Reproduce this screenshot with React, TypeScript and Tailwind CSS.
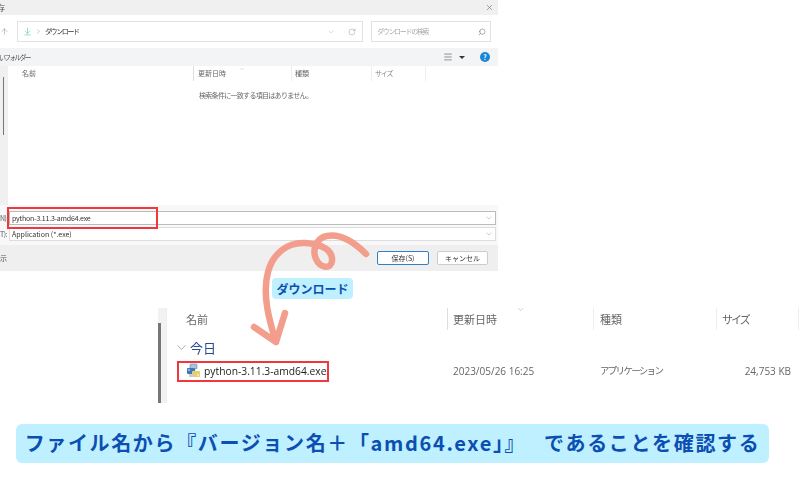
import { ChevronDown, Search, RotateCw, ArrowUp, ArrowDownToLine, ChevronRight, X, Menu } from "lucide-react";

const JP = "font-['Noto_Sans_CJK_JP','Noto_Sans',sans-serif]";

function PythonInstallerIcon() {
  return (
    <svg width="16" height="16" viewBox="0 0 16 16">
      <rect x="4" y="1" width="7" height="5" rx="1" fill="#a9c4de" stroke="#5a7fa8" strokeWidth="0.6" />
      <rect x="1" y="5" width="8" height="6" rx="1" fill="#3f78b5" />
      <rect x="6" y="8" width="8" height="6" rx="1" fill="#e8cf6a" />
      <rect x="3" y="11" width="5" height="3" fill="#c9ccd0" />
      <circle cx="3" cy="7" r="0.8" fill="#fff" />
      <circle cx="12" cy="12" r="0.8" fill="#fff" />
    </svg>
  );
}

function SaveDialog() {
  return (
    <div className={`w-[498px] h-[271px] flex flex-col overflow-hidden bg-white text-[7px] leading-none text-[#555] blur-[0.3px] ${JP}`}>
      {/* title bar */}
      <div className="h-[15px] shrink-0 bg-[#f0f0f0] flex items-center justify-between pr-[4px]">
        <span className="text-[8px] text-[#444] -ml-[3px]">存</span>
        <X size={9} strokeWidth={1.2} className="text-[#444]" />
      </div>

      {/* address row */}
      <div className="h-[33px] shrink-0 flex items-center pr-[7px]">
        <ArrowUp size={9} strokeWidth={1} className="text-[#666] mr-[8px]" />
        <div className="w-[346px] h-[21px] border border-[#e2e2e2] flex items-center pl-[5px] pr-[6px]">
          <ArrowDownToLine size={9} strokeWidth={2} className="text-[#6fd4c0]" />
          <ChevronRight size={7} strokeWidth={1.2} className="text-[#666] ml-[3px] mr-[3px]" />
          <span className="text-[#333] tracking-[-1.4px]">ダウンロード</span>
          <ChevronDown size={8} strokeWidth={1} className="text-[#999] ml-auto" />
          <RotateCw size={8} strokeWidth={1} className="text-[#666] ml-[13px]" />
        </div>
        <div className="ml-[8px] w-[120px] h-[21px] border border-[#e2e2e2] flex items-center justify-between pl-[5px] pr-[4px] text-[#aaa]">
          <span className="tracking-[-1.3px]">ダウンロードの検索</span>
          <Search size={8} strokeWidth={1.4} className="text-[#555] -scale-x-100" />
        </div>
      </div>

      {/* toolbar */}
      <div className="h-[18px] shrink-0 bg-[#f3f4f6] flex items-center pr-[8px]">
        <span className="text-[#555] -ml-[1px] tracking-[-1.9px]">いフォルダー</span>
        <Menu size={10} strokeWidth={1.2} className="text-[#333] ml-auto" />
        <span className="ml-[6px] w-0 h-0 border-x-[3px] border-x-transparent border-t-[3px] border-t-[#334]" />
        <span className="ml-[15px] w-[10px] h-[10px] rounded-full bg-[#1b86d8] text-white text-[7px] font-bold flex items-center justify-center">?</span>
      </div>

      {/* file list */}
      <div className="flex-1 flex min-h-0">
        <div className="w-[8px] shrink-0 bg-[#f0f0f0] pl-[3px] pt-[11px]">
          <div className="w-[1px] h-[58px] bg-[#777]" />
        </div>
        <div className="flex-1 min-w-0">
          <div className="flex h-[15px] items-center text-[#666]">
            <div className="w-[185px] pl-[14px]">名前</div>
            <div className="relative w-[98px] h-full border-l border-[#ddd] pl-[4px] flex items-center">
              更新日時
              <ChevronDown size={6} strokeWidth={1} className="absolute left-[45px] top-0 text-[#888]" />
            </div>
            <div className="w-[80px] h-full border-l border-[#eee] pl-[3px] flex items-center">種類</div>
            <div className="w-[54px] h-full border-l border-[#eee] pl-[3px] flex items-center text-[#888] tracking-[-1.2px]">サイズ</div>
            <div className="h-full border-l border-[#eee]" />
          </div>
          <p className="mt-[11px] ml-[191px] text-[#666] tracking-[-0.7px]">検索条件に一致する項目はありません。</p>
        </div>
      </div>

      {/* file name and type */}
      <div className="h-[40px] shrink-0 bg-[#f8f8f8] pl-[9px] pr-[2px] pt-[6px] flex flex-col gap-[2px]">
        <div className="relative h-[14px] bg-white border border-[#bbb] flex items-center justify-between pl-[2px] pr-[2px] text-[#333]">
          <span className="absolute -left-[10px] text-[#555] tracking-[-0.5px]">N):</span>
          <span className="tracking-[-0.2px]">python-3.11.3-amd64.exe</span>
          <ChevronDown size={8} strokeWidth={1} className="text-[#666]" />
        </div>
        <div className="relative h-[14px] bg-white border border-[#ddd] flex items-center justify-between pl-[2px] pr-[2px] text-[#333]">
          <span className="absolute -left-[10px] text-[#555] tracking-[-0.5px]">T):</span>
          <span>Application (*.exe)</span>
          <ChevronDown size={8} strokeWidth={1} className="text-[#666]" />
        </div>
      </div>

      {/* buttons */}
      <div className="h-[26px] shrink-0 bg-[#efefef] flex items-center pr-[10px]">
        <span className="text-[#555]">示</span>
        <button className="ml-auto w-[52px] h-[14px] bg-white border border-[#2f7fc9] rounded-[2px] text-[7px] text-[#333]">保存(S)</button>
        <button className="ml-[8px] w-[51px] h-[14px] bg-white border border-[#ccc] rounded-[2px] text-[7px] text-[#333]">キャンセル</button>
      </div>
    </div>
  );
}

function ExplorerCrop() {
  return (
    <div className={`mt-[37px] ml-[158px] h-[95px] flex blur-[0.2px] ${JP}`}>
      <div className="w-[8px] shrink-0 bg-[#f2f2f2] pt-[15px]">
        <div className="w-[3px] h-[80px] bg-[#777]" />
      </div>
      <div className="flex-1 border-l border-[#eee]">
        <div className="flex h-[22px] items-center text-[11px] leading-none text-[#666]">
          <div className="w-[280px] pl-[19px]">名前</div>
          <div className="relative w-[146px] h-full border-l border-[#ddd] pl-[5px] flex items-center">
            更新日時
            <ChevronDown size={9} strokeWidth={1} className="absolute left-[68px] -top-[3px] text-[#888]" />
          </div>
          <div className="w-[123px] h-full border-l border-[#eee] pl-[6px] flex items-center">種類</div>
          <div className="w-[82px] h-full border-l border-[#eee] pl-[5px] flex items-center tracking-[-2px]">サイズ</div>
          <div className="h-full border-l border-[#eee]" />
        </div>
        <div className="mt-[9px] ml-[7px] flex items-center h-[16px] text-[13px] leading-none text-[#2b4a8f]">
          <ChevronDown size={15} strokeWidth={1} className="text-[#777] mr-[1px]" />
          今日
        </div>
        <div className="mt-[8px] flex items-center h-[16px] text-[10px] leading-none text-[#666]">
          <div className="w-[280px] pl-[19px] flex items-center gap-[2px]">
            <PythonInstallerIcon />
            <span className="text-[10.3px] text-[#222] font-['Open_Sans',sans-serif]">python-3.11.3-amd64.exe</span>
          </div>
          <div className="w-[147px] pl-[6px] font-['Open_Sans',sans-serif]">2023/05/26 16:25</div>
          <div className="w-[123px] pl-[6px] text-[9.5px] tracking-[-1.7px]">アプリケーション</div>
          <div className="w-[74px] text-right font-['Open_Sans',sans-serif]">24,753 KB</div>
        </div>
      </div>
    </div>
  );
}

export default function App() {
  return (
    <div className="relative w-[800px] h-[500px] overflow-hidden bg-white">
      <SaveDialog />
      <ExplorerCrop />

      {/* banner */}
      <div className="mt-[21px] ml-[16px] w-[753px] h-[39px] rounded-[6px] bg-[#bff0ff] flex items-center justify-center pb-[1px]">
        <span className={`text-[20px] leading-none font-bold tracking-[1.65px] whitespace-pre text-[#0b4fb3] ${JP}`}>
          ファイル名から『バージョン名＋「amd64.exe」』　 であることを確認する
        </span>
      </div>

      {/* annotations */}
      <div className="absolute left-[7px] top-[207px] w-[151px] h-[22px] border-2 border-[#f0373d]" />
      <div className="absolute left-[177px] top-[361px] w-[152px] h-[21px] border-2 border-[#f0373d]" />
      <svg className="absolute left-0 top-0" width="800" height="500" viewBox="0 0 800 500" fill="none">
        <path
          d="M366 254 C352 240 338 234 327 236 C316 238 312 250 316 259 C320 268 331 270 332 261 C333 250 322 244 305 243 C288 242 273 253 268 272 C262 294 269 320 276 342 M254 327 L276 342 L285 313"
          stroke="#f39e8d"
          strokeWidth="6.5"
          strokeLinecap="round"
          strokeLinejoin="round"
        />
      </svg>
      <div className={`absolute left-[272px] top-[278px] w-[81px] h-[21px] rounded-[4px] bg-[#bff0ff] flex items-center justify-center text-[12px] leading-none font-bold text-[#0b4fb3] ${JP}`}>
        ダウンロード
      </div>
    </div>
  );
}
